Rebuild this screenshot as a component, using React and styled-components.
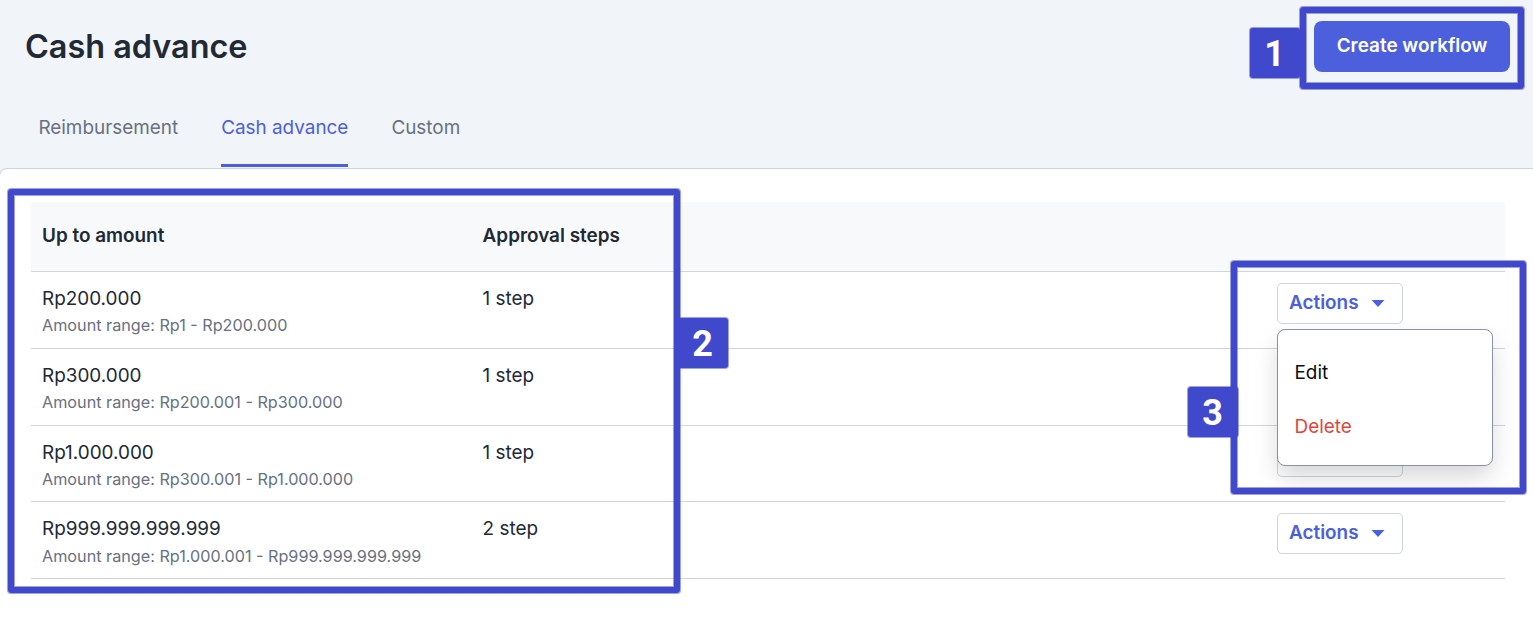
import React, { useState } from "react";
import styled, { createGlobalStyle } from "styled-components";

const GlobalStyle = createGlobalStyle`
  * {
    box-sizing: border-box;
  }
  body {
    margin: 0;
    background: #f1f4f9;
    font-family: Inter, "Liberation Sans", sans-serif;
    color: #212934;
    overflow: hidden;
  }
`;

const Page = styled.div`
  position: relative;
  display: flex;
  flex-direction: column;
  height: 621px;
  overflow: hidden;
`;

const Header = styled.header`
  display: flex;
  justify-content: space-between;
  align-items: flex-start;
  height: 107px;
  padding: 21px 23px 0 25px;
`;

const Title = styled.h1`
  margin: 0;
  font-size: 32.4px;
  line-height: 51px;
  font-weight: 600;
  white-space: nowrap;
`;

const PrimaryButton = styled.button`
  width: 196px;
  height: 51px;
  padding: 0 0 3px;
  border: none;
  border-radius: 8px;
  background: #4c60dd;
  color: #fff;
  font-family: inherit;
  font-size: 18.9px;
  font-weight: 600;
  white-space: nowrap;
`;

const Tabs = styled.nav`
  display: flex;
  gap: 43px;
  height: 61px;
  padding-left: 38.4px;
`;

const Tab = styled.button`
  height: 60px;
  padding: 0 0 17px;
  border: none;
  border-bottom: 3px solid ${({ $active }) => ($active ? "#4c60dd" : "transparent")};
  background: none;
  color: ${({ $active }) => ($active ? "#4c60dd" : "#677180")};
  font-family: inherit;
  font-size: 18.9px;
  white-space: nowrap;
`;

const Panel = styled.main`
  flex: 1;
  margin-left: -1px;
  padding: 33px 28px 0 31px;
  border: 1px solid #cdd5df;
  border-right: none;
  border-bottom: none;
  border-radius: 8px 0 0 0;
  background: #fff;
`;

const Row = styled.div`
  display: grid;
  grid-template-columns: 440.6px 1fr 228px;
  height: 76.75px;
  border-bottom: 1px solid #cdd5df;
`;

const HeadRow = styled(Row)`
  height: 70px;
  align-items: center;
  background: #f8f9fb;
  font-size: 18.9px;
  font-weight: 600;
`;

const Cell = styled.div`
  padding: 0 11px;
  white-space: nowrap;
`;

const HeadCell = styled(Cell)`
  padding-bottom: 2px;
`;

const Main = styled.div`
  padding-top: 15px;
  font-size: 18.9px;
  line-height: 24px;
`;

const Sub = styled.div`
  padding-top: 3.3px;
  font-size: 16.2px;
  line-height: 22px;
  color: #677180;
`;

const ActionCell = styled.div`
  position: relative;
  padding-top: 10.8px;
`;

const ActionButton = styled.button`
  display: flex;
  align-items: center;
  gap: 12px;
  width: 126px;
  height: 41px;
  padding: 0 0 2.5px 11px;
  border: 1px solid #cdd5df;
  border-radius: 5px;
  background: #fff;
  color: #4c60dd;
  font-family: inherit;
  font-size: 18.9px;
  font-weight: 600;
`;

const Caret = styled.svg`
  width: 14px;
  height: 7px;
  margin-top: 2.5px;
  fill: #4c60dd;
`;

const Menu = styled.div`
  position: absolute;
  z-index: 2;
  top: 57px;
  left: 0;
  width: 216px;
  height: 137px;
  padding: 16px 0 14px;
  border: 1px solid #8792a2;
  border-radius: 8px;
  background: #fff;
  box-shadow: 0 12px 24px -2px rgba(0, 0, 0, 0.17);
`;

const MenuItem = styled.div`
  height: 54px;
  padding: 0 16.5px;
  font-size: 18.9px;
  line-height: 54px;
  color: ${({ $danger }) => ($danger ? "#d9483f" : "#0b0d12")};
`;

// Numbered highlights floating above the page
const Frame = styled.div`
  position: absolute;
  z-index: 5;
  left: ${({ $x }) => $x}px;
  top: ${({ $y }) => $y}px;
  width: ${({ $w }) => $w}px;
  height: ${({ $h }) => $h}px;
  border: 6px solid #4048cc;
  border-radius: 3px;
  box-shadow: 0 0 0 1px rgba(64, 72, 204, 0.5), inset 0 0 0 1px rgba(64, 72, 204, 0.5);
  pointer-events: none;
`;

const Badge = styled.div`
  position: absolute;
  z-index: 5;
  left: ${({ $x }) => $x}px;
  top: ${({ $y }) => $y}px;
  display: flex;
  align-items: center;
  justify-content: center;
  width: 50px;
  height: 50px;
  padding: 2px 1px 0 0;
  border-radius: 3px;
  background: #4048cc;
  box-shadow: 0 0 0 1px rgba(64, 72, 204, 0.5);
  color: #fff;
  font-family: Roboto, "Liberation Sans", sans-serif;
  font-size: 36px;
  font-weight: 700;
`;

const tabs = ["Reimbursement", "Cash advance", "Custom"];

const rows = [
  { amount: "Rp200.000", range: "Rp1 - Rp200.000", steps: 1 },
  { amount: "Rp300.000", range: "Rp200.001 - Rp300.000", steps: 1 },
  { amount: "Rp1.000.000", range: "Rp300.001 - Rp1.000.000", steps: 1 },
  { amount: "Rp999.999.999.999", range: "Rp1.000.001 - Rp999.999.999.999", steps: 2 },
];

const callouts = [
  { label: "1", frame: [1300, 7, 224, 82], badge: [1250, 28] },
  { label: "2", frame: [8, 189, 672, 404], badge: [678, 318] },
  { label: "3", frame: [1231, 261, 295, 233], badge: [1188, 387] },
];

export default function App() {
  const [activeTab, setActiveTab] = useState("Cash advance");
  const [openRow, setOpenRow] = useState(0);

  // an open menu spans the two rows below it
  const isCovered = (i) => openRow !== null && i > openRow && i <= openRow + 2;

  return (
    <Page>
      <GlobalStyle />
      <Header>
        <Title>Cash advance</Title>
        <PrimaryButton type="button">Create workflow</PrimaryButton>
      </Header>
      <Tabs>
        {tabs.map((tab) => (
          <Tab
            key={tab}
            type="button"
            $active={tab === activeTab}
            onClick={() => setActiveTab(tab)}
          >
            {tab}
          </Tab>
        ))}
      </Tabs>
      <Panel>
        <HeadRow>
          <HeadCell>Up to amount</HeadCell>
          <HeadCell>Approval steps</HeadCell>
        </HeadRow>
        {rows.map((row, i) => (
          <Row key={row.amount}>
            <Cell>
              <Main>{row.amount}</Main>
              <Sub>Amount range: {row.range}</Sub>
            </Cell>
            <Cell>
              <Main>{row.steps} step</Main>
            </Cell>
            <ActionCell>
              <ActionButton type="button" onClick={() => setOpenRow(openRow === i ? null : i)}>
                {!isCovered(i) && (
                  <>
                    Actions
                    <Caret viewBox="0 0 14 7">
                      <path d="M0.5 0h13L7 7z" />
                    </Caret>
                  </>
                )}
              </ActionButton>
              {openRow === i && (
                <Menu>
                  <MenuItem>Edit</MenuItem>
                  <MenuItem $danger>Delete</MenuItem>
                </Menu>
              )}
            </ActionCell>
          </Row>
        ))}
      </Panel>
      {callouts.map(({ label, frame, badge }) => (
        <React.Fragment key={label}>
          <Badge $x={badge[0]} $y={badge[1]}>{label}</Badge>
          <Frame $x={frame[0]} $y={frame[1]} $w={frame[2]} $h={frame[3]} />
        </React.Fragment>
      ))}
    </Page>
  );
}
